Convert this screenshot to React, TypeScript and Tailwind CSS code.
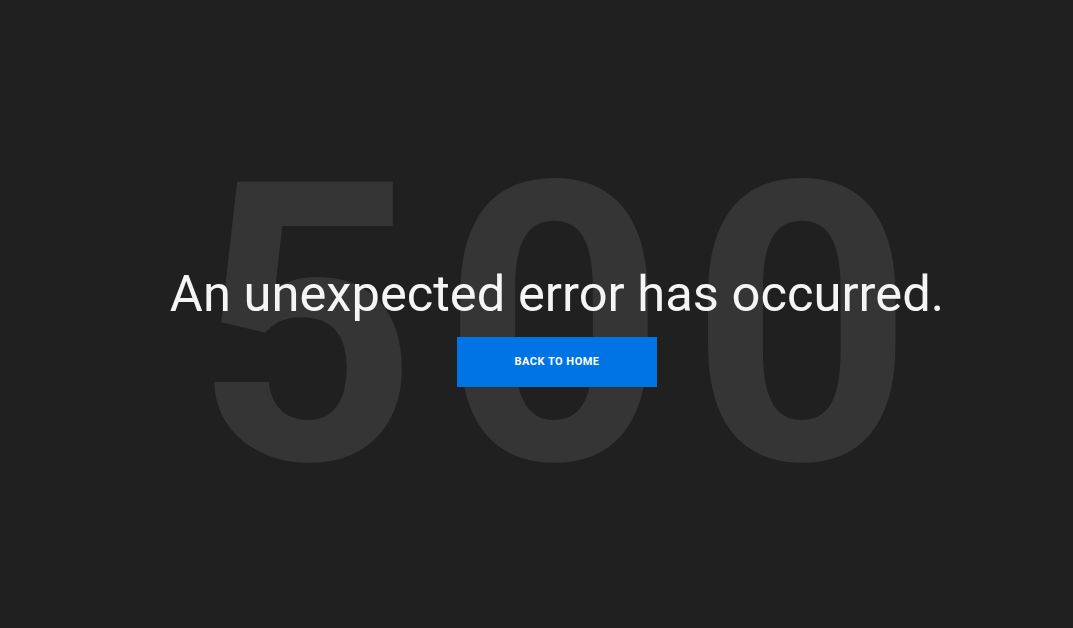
import React from "react";

export default function App() {
  return (
    <div className="w-[1073px] h-[628px] bg-[#202020] overflow-hidden relative" style={{ fontFamily: "Roboto, 'Liberation Sans', sans-serif" }}>
      <div className="absolute inset-0 flex items-center justify-center pl-[59px] pt-[24px]">
        <div className="text-[#353535] text-[390px] leading-none font-bold tracking-[24px] select-none">500</div>
      </div>
      <div className="relative h-full flex flex-col items-center pl-[41px] pt-[264px]">
        <h1 className="text-[#f5f5f5] text-[50.7px] leading-[60px] font-normal">An unexpected error has occurred.</h1>
        <button className="mt-[13px] w-[200px] h-[50px] bg-[#0074e4] text-white text-[11px] font-bold tracking-[0.5px]">BACK TO HOME</button>
      </div>
    </div>
  );
}
